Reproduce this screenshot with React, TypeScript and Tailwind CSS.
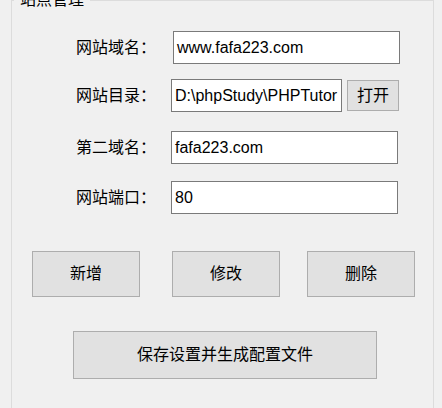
const font = { fontFamily: '"Liberation Sans", "Noto Sans CJK SC", sans-serif' };

const rows = [
  { label: "网站域名：", value: "www.fafa223.com", top: "mt-[30px]", inputMl: "ml-[17px]", width: "w-[227px]", open: false },
  { label: "网站目录：", value: "D:\\phpStudy\\PHPTutor", top: "mt-[15px]", inputMl: "ml-[15px]", width: "w-[171px]", open: true },
  { label: "第二域名：", value: "fafa223.com", top: "mt-[19px]", inputMl: "ml-[15px]", width: "w-[227px]", open: false },
  { label: "网站端口：", value: "80", top: "mt-[17px]", inputMl: "ml-[15px]", width: "w-[227px]", open: false },
];

function Field({ row }: { row: (typeof rows)[number] }) {
  return (
    <div className={`${row.top} flex items-center h-[33px]`}>
      <span className="ml-[64px] w-[80px] text-[16px] leading-none text-black whitespace-nowrap">{row.label}</span>
      <div
        className={`${row.inputMl} ${row.width} h-[33px] border border-[#7a7a7a] bg-white flex items-center pl-[3px] text-[16px] text-black whitespace-nowrap overflow-hidden`}
      >
        {row.value}
      </div>
      {row.open && (
        <button className="ml-[5px] w-[52px] h-[31px] border border-[#adadad] bg-[#e1e1e1] text-[16px] text-black leading-none">
          打开
        </button>
      )}
    </div>
  );
}

export default function App() {
  return (
    <div className="w-[442px] h-[408px] overflow-hidden bg-[#f0f0f0]" style={font}>
      <div className="relative ml-[11px] w-[423px] h-[420px] border border-[#dcdcdc]">
        {/* group box title, sits over the top border */}
        <span className="absolute left-[2px] top-[-9px] px-[6px] bg-[#f0f0f0] text-[16px] leading-[16px] text-black">
          站点管理
        </span>

        {rows.map((row) => (
          <Field key={row.label} row={row} />
        ))}

        <div className="mt-[37px] flex items-center h-[46px]">
          <button className="ml-[20px] w-[108px] h-[46px] border border-[#adadad] bg-[#e1e1e1] text-[16px] text-black">
            新增
          </button>
          <button className="ml-[32px] w-[108px] h-[46px] border border-[#adadad] bg-[#e1e1e1] text-[16px] text-black">
            修改
          </button>
          <button className="ml-[27px] w-[108px] h-[46px] border border-[#adadad] bg-[#e1e1e1] text-[16px] text-black">
            删除
          </button>
        </div>

        <button className="mt-[34px] ml-[61px] w-[304px] h-[48px] border border-[#adadad] bg-[#e1e1e1] text-[16px] text-black block">
          保存设置并生成配置文件
        </button>
      </div>
    </div>
  );
}
